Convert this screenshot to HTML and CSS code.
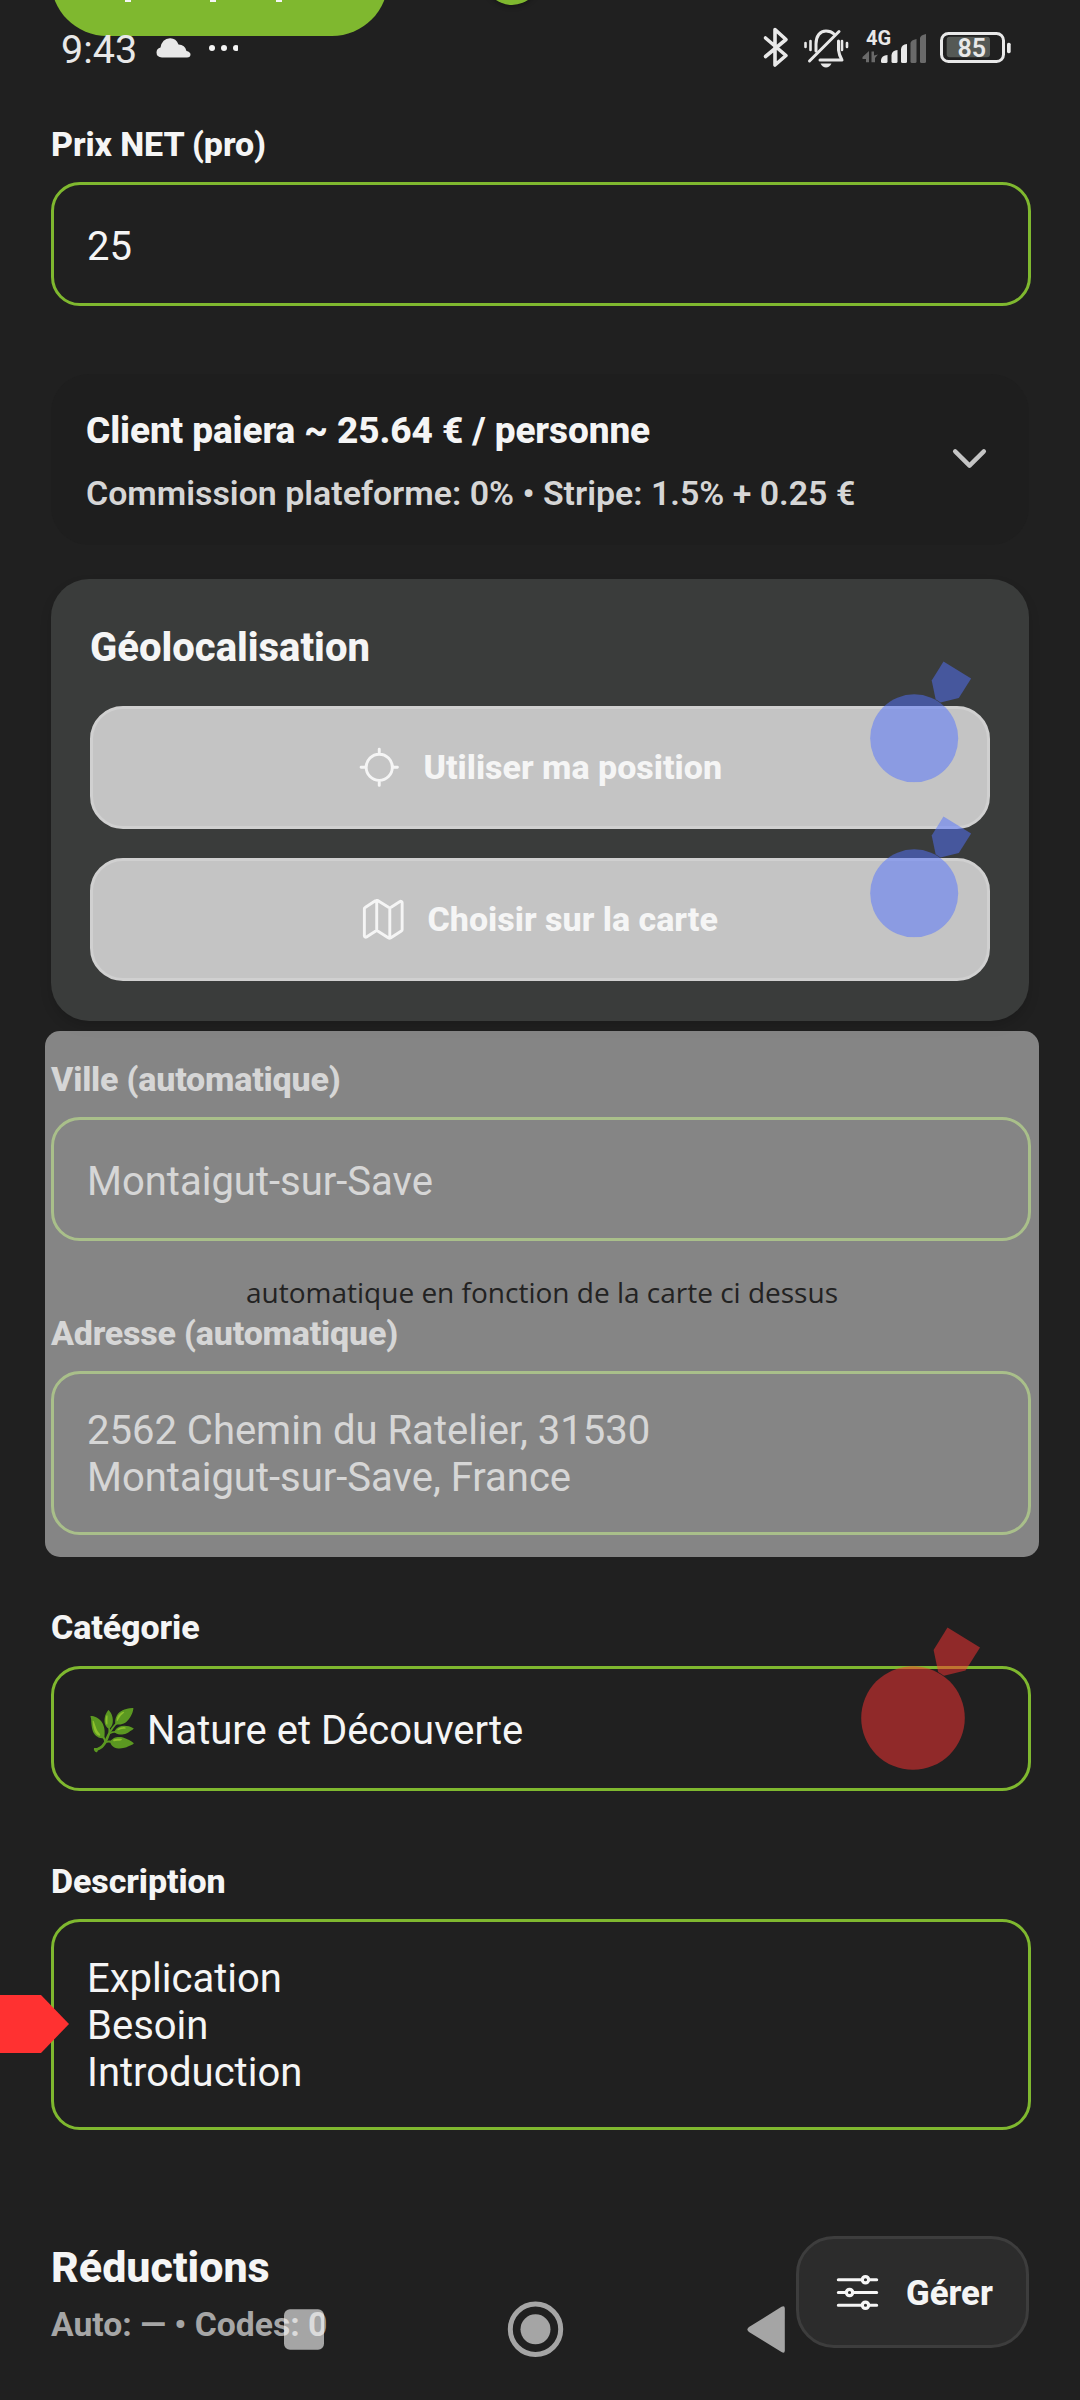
FILE: index.html
```html
<!DOCTYPE html>
<html lang="fr">
<head>
<meta charset="utf-8">
<title>Formulaire</title>
<link rel="stylesheet" href="styles.css">
</head>
<body>
<svg width="0" height="0" class="defs" aria-hidden="true">
  <symbol id="pointer" viewBox="0 0 120 143">
    <circle cx="52" cy="91" r="51.8"/>
    <path d="M86.500 0.500L119 20.500L104.500 43.500L83 48.800L77.200 45L72.600 23Z"/>
  </symbol>
</svg>

<header class="top-actions">
  <div class="pill"></div>
  <div class="dot"></div>
  <i class="tail tail-a"></i><i class="tail tail-b"></i><i class="tail tail-c"></i>
</header>

<div class="status">
  <span class="clock">9:43</span>
  <svg class="cloud" width="82" height="24" viewBox="0 0 82 24">
    <path fill="#e8e8e8" d="M6 21.500Q0.500 21 0.500 16.500Q0.500 12.500 4.500 11.500Q6 2.500 14 2.200Q20 2 22.500 8.500Q29 8.500 30.500 15Q34.500 16 34.500 18.500Q34.500 21.500 31 21.500Z"/>
    <g fill="#f4f4f4"><circle cx="56" cy="12" r="3"/><circle cx="68" cy="12" r="3"/><circle cx="80" cy="12" r="3"/></g>
  </svg>
  <svg class="indicators" width="250" height="44" viewBox="762 26 250 44">
    <path d="M765.500 38L786 55.500L775 65V29.500L786 39.500L765.500 56.500" fill="none" stroke="#e8e8e8" stroke-width="3.600" stroke-linejoin="round" stroke-linecap="round"/>
    <g fill="none" stroke="#e8e8e8" stroke-width="3" stroke-linecap="round" stroke-linejoin="round">
      <path d="M816 51V44C816 36 820 31 826 31C829 31 832 32 834 34"/>
      <path d="M838.500 41V50Q839 55 842 60H820"/>
      <path d="M839 31.500L809.500 61"/>
      <path d="M805.500 43V47M810.500 41V50M842 41V50M847 43V47" stroke-width="2.600"/>
    </g>
    <path fill="#e8e8e8" d="M820.500 63.500H831.500Q829.500 67.500 826 67.500Q822.500 67.500 820.500 63.500Z"/>
    <text x="866" y="45" class="net">4G</text>
    <g fill="#6a6a6a">
      <path d="M862.500 57L869 51V62.300H866V59H862.500Z"/>
      <path d="M871.500 51.500H874V55.500L878 54.500L875 58V62.300H871.500Z"/>
      <path d="M910.500 43Q911 40 916.500 39V61.500Q916.500 63 915 63H912Q910.500 63 910.500 61.500Z"/>
      <path d="M920 38Q920.500 35 926 34V61.500Q926 63 924.500 63H921.500Q920 63 920 61.500Z"/>
    </g>
    <g fill="#e8e8e8">
      <path d="M881 60Q881.500 55.500 887.500 55V61.500Q887.500 63 886 63H882.500Q881 63 881 61.500Z"/>
      <path d="M891.500 55Q892 50.500 897.500 50V61.500Q897.500 63 896 63H893Q891.500 63 891.500 61.500Z"/>
      <path d="M901 49Q901.500 44.500 907 44V61.500Q907 63 905.500 63H902.500Q901 63 901 61.500Z"/>
    </g>
    <rect x="941.500" y="33.500" width="62" height="28" rx="7" fill="none" stroke="#e8e8e8" stroke-width="3"/>
    <rect x="946.700" y="36.800" width="43.300" height="20.500" rx="3" fill="#555955"/>
    <rect x="1007" y="42.700" width="3.700" height="10.500" rx="1.600" fill="#e8e8e8"/>
    <text x="957.500" y="57.300" class="level">85</text>
  </svg>
</div>

<main class="form">
  <section class="field price">
    <label>Prix NET (pro)</label>
    <div class="input single">25</div>
  </section>

  <section class="summary">
    <div>
      <div class="summary-title">Client paiera ~ 25.64 € / personne</div>
      <div class="summary-sub">Commission plateforme: 0% • Stripe: 1.5% + 0.25 €</div>
    </div>
    <svg width="51" height="51" viewBox="0 0 512 512"><path d="M112 184l144 144 144-144" fill="none" stroke="#c4c4c4" stroke-width="44" stroke-linecap="round" stroke-linejoin="round"/></svg>
  </section>

  <section class="geo">
    <h2>Géolocalisation</h2>
    <div class="geo-btn">
      <svg class="icon" viewBox="0 0 512 512"><path d="M256 96V56M256 456v-40M256 112a144 144 0 10144 144 144 144 0 00-144-144zM416 256h40M56 256h40"/></svg>
      <span>Utiliser ma position</span>
      <svg class="pointer blue first"><use href="#pointer"/></svg>
    </div>
    <div class="geo-btn">
      <svg class="icon" viewBox="0 0 512 512"><path d="M313.270 124.640L198.730 51.360a32 32 0 00-29.280.350L56.510 127.490A16 16 0 0048 141.630v295.800a16 16 0 0023.490 14.140l97.820-63.790a32 32 0 0129.500-.240l111.860 73a32 32 0 0029.270-.110l115.430-75.940a16 16 0 008.630-14.200V74.570a16 16 0 00-23.490-14.140l-98 63.860a32 32 0 01-29.240.350zM328 128v336M184 48v336"/></svg>
      <span>Choisir sur la carte</span>
      <svg class="pointer blue second"><use href="#pointer"/></svg>
    </div>
  </section>

  <div class="auto-group">
    <section class="field">
      <label>Ville (automatique)</label>
      <div class="input single">Montaigut-sur-Save</div>
    </section>
    <section class="field">
      <label>Adresse (automatique)</label>
      <div class="input multi">2562 Chemin du Ratelier, 31530<br>Montaigut-sur-Save, France</div>
    </section>
    <div class="veil">automatique en fonction de la carte ci dessus</div>
  </div>

  <section class="field category">
    <label>Catégorie</label>
    <div class="input single">🌿 Nature et Découverte</div>
    <svg class="pointer red"><use href="#pointer"/></svg>
  </section>

  <section class="field description">
    <label>Description</label>
    <div class="input multi">Explication<br>Besoin<br>Introduction</div>
    <div class="arrow"></div>
  </section>

  <section class="discounts">
    <div>
      <h3>Réductions</h3>
      <p>Auto: — • Codes: 0</p>
    </div>
    <div class="manage">
      <svg class="icon" viewBox="0 0 512 512"><path d="M368 128h80M64 128h240M368 384h80M64 384h240M208 256h240M64 256h80"/><circle cx="336" cy="128" r="32"/><circle cx="176" cy="256" r="32"/><circle cx="336" cy="384" r="32"/></svg>
      <span>Gérer</span>
    </div>
  </section>
</main>

<svg class="navbar" width="510" height="60" viewBox="280 2300 510 60">
  <rect x="284" y="2309.300" width="40" height="40.500" rx="6"/>
  <circle cx="535.500" cy="2329.300" r="15"/>
  <circle cx="535.500" cy="2329.300" r="25.200" class="ring"/>
  <path d="M749 2327L781.500 2306.800Q784.800 2305 784.800 2308.500V2350.500Q784.800 2354 781.500 2352L749 2332Q745.800 2329.500 749 2327Z"/>
</svg>
</body>
</html>
```
FILE: styles.css
```css
* { box-sizing: border-box; }
body {
  margin: 0;
  position: relative;
  width: 1080px;
  height: 2400px;
  overflow: hidden;
  background: #202020;
  color: #f5f5f5;
  font-family: Roboto, "Noto Sans", sans-serif;
}
.defs { position: absolute; }
h2, h3, p { margin: 0; }

.top-actions {
  position: relative;
  display: flex;
  align-items: flex-end;
  gap: 96px;
  height: 36px;
  padding-left: 51px;
  overflow: hidden;
}
.pill { flex: none; width: 337px; height: 112px; border-radius: 56px; background: #7fb82f; }
.dot { flex: none; width: 56px; height: 56px; margin-bottom: 31px; border-radius: 50%; background: #7fb82f; box-shadow: 0 2px 5px rgba(0, 0, 0, .3); }
.tail { position: absolute; top: 0; width: 6px; height: 1.500px; background: #f5f5f5; }
.tail-a { left: 125px; }
.tail-b { left: 210px; }
.tail-c { left: 276px; }

.status { position: absolute; left: 61px; top: 26px; width: 951px; height: 44px; display: flex; }
.clock { width: 95px; font-size: 39.500px; line-height: 48px; color: #e8e8e8; }
.cloud { margin-top: 10px; }
.indicators { margin-left: auto; }
.net { font: 700 20px Roboto, sans-serif; fill: #e8e8e8; }
.level { font: 600 25px Roboto, sans-serif; fill: #e8e8e8; }

.form { padding: 88px 51px 0 51px; }

.field { position: relative; width: 980px; }
.field label { display: block; height: 40px; margin-bottom: 18px; font-size: 34px; line-height: 40px; font-weight: 800; letter-spacing: -.1px; }
.input { border: 3px solid #7fb82f; border-radius: 29px; font-size: 40px; line-height: 47px; padding-left: 33px; }
.single { height: 124px; padding-top: 38px; }
.multi { padding-top: 33px; padding-bottom: 31px; }

.summary {
  display: flex;
  align-items: center;
  justify-content: space-between;
  height: 171px;
  margin: 68px 0 34px;
  padding: 3px 34px 0 35px;
  border-radius: 38px;
  background: #1e1e1e;
}
.summary svg { margin-bottom: 5px; }
.summary-title { font-size: 37px; line-height: 43px; font-weight: 800; letter-spacing: -.1px; }
.summary-sub { margin-top: 22px; font-size: 33.900px; line-height: 40px; font-weight: 600; color: #d6d6d6; }

.geo {
  display: flex;
  flex-direction: column;
  height: 442px;
  padding: 45px 39px 40px;
  border-radius: 38px;
  background: #3a3c3b;
  box-shadow: 0 6px 12px rgba(0, 0, 0, .14);
}
.geo h2 { height: 47px; margin-bottom: 35px; font-size: 40px; line-height: 47px; font-weight: 800; }
.geo-btn {
  position: relative;
  display: flex;
  align-items: center;
  justify-content: center;
  gap: 21px;
  height: 123px;
  border: 3px solid #d0d0d0;
  border-radius: 33px;
  background: #c4c4c4;
  font-size: 34px;
  line-height: 40px;
  font-weight: 800;
}
.geo-btn span { margin-bottom: 2px; }
.geo-btn + .geo-btn { margin-top: 29px; }
.icon { width: 46.500px; height: 46.500px; fill: none; stroke: #f5f5f5; stroke-width: 32; stroke-linecap: round; stroke-linejoin: round; }
.geo-btn .icon { margin-left: -2px; }

.pointer { position: absolute; width: 120px; height: 143px; }
.blue { width: 102px; height: 121.500px; left: 777px; fill: rgba(82, 113, 255, .5); }
.first { top: -48px; }
.second { top: -45px; }
.red { left: 810px; top: 20px; fill: rgba(255, 49, 49, .5); }

.auto-group { position: relative; margin-top: 38px; }
.auto-group .field + .field { margin-top: 72px; }
.veil {
  position: absolute;
  left: -6px;
  top: -28px;
  width: 994px;
  height: 526px;
  padding-top: 242px;
  border-radius: 15px;
  background: rgba(196, 196, 196, .62);
  color: #222;
  text-align: center;
  font: 28px/38px "Open Sans", "Noto Sans", sans-serif;
}
.auto-group label { letter-spacing: -.2px; }

.category { margin-top: 72px; }
.category label { margin-bottom: 19px; }
.category .single { height: 125px; }
.description { margin-top: 70px; }
.arrow {
  position: absolute;
  left: -51px;
  top: 134px;
  width: 69px;
  height: 58px;
  background: #ff3131;
  clip-path: polygon(0 0, 41px 0, 100% 50%, 41px 100%, 0 100%);
}

.discounts { display: flex; align-items: center; justify-content: space-between; height: 112px; margin-top: 106px; }
.discounts h3 { padding-top: 2px; font-size: 43px; line-height: 50px; font-weight: 800; }
.discounts p { margin-top: 13px; font-size: 33.700px; line-height: 40px; font-weight: 700; color: #a6a6a6; }
.manage {
  display: flex;
  align-items: center;
  gap: 23px;
  width: 233px;
  height: 112px;
  padding-left: 33px;
  border: 3px solid #3d3d3d;
  border-radius: 38px;
  background: #2c2c2c;
  font-size: 34.700px;
  line-height: 40px;
  font-weight: 800;
}
.manage span { padding-top: 2px; }
.manage .icon { width: 51px; height: 51px; }

.navbar { position: absolute; left: 280px; top: 2300px; fill: rgba(255, 255, 255, .6); }
.navbar .ring { fill: none; stroke: rgba(255, 255, 255, .6); stroke-width: 5; }
```
